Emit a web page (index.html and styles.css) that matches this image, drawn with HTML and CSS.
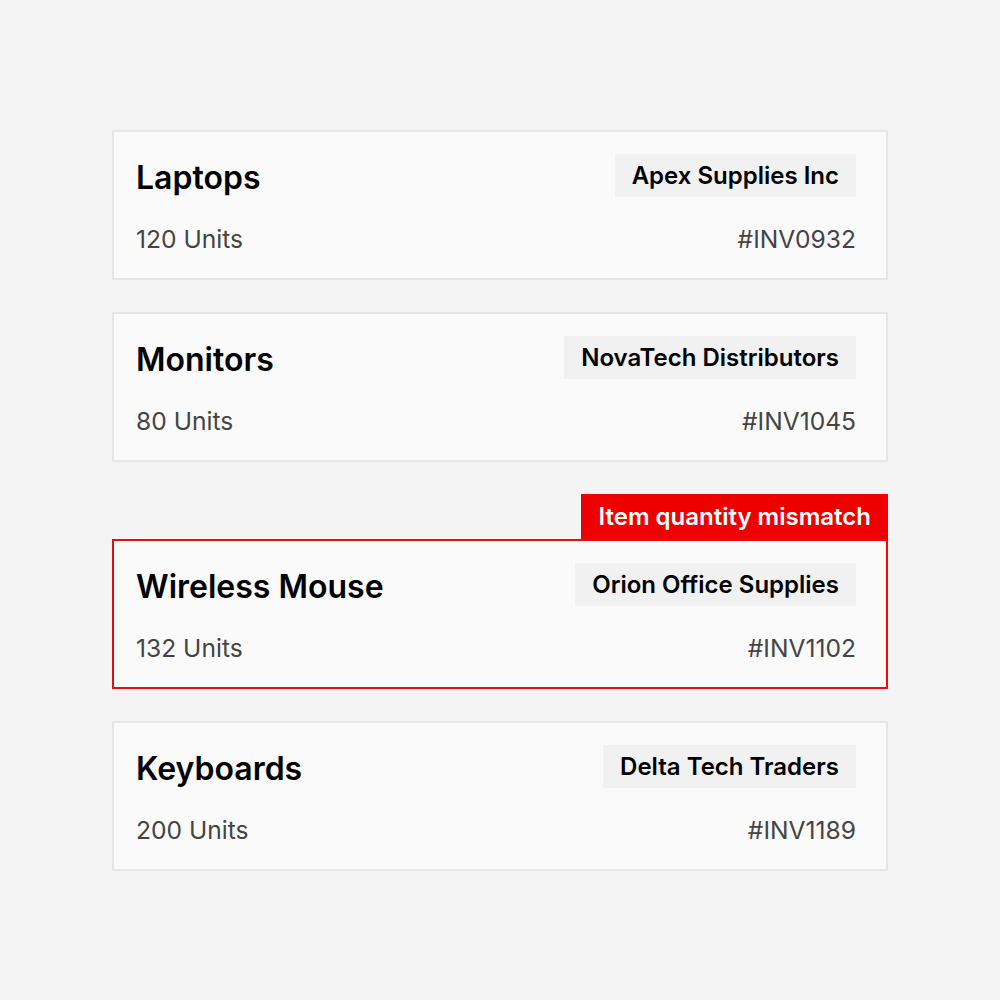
FILE: index.html
```html
<!DOCTYPE html>
<html lang="en">
<head>
  <meta charset="UTF-8">
  <title>Inventory Items</title>
  <link rel="stylesheet" href="styles.css">
</head>
<body>
  <div class="list">
    <div class="item">
      <div class="item-card">
        <div class="item-top">
          <h2 class="item-name">Laptops</h2>
          <span class="supplier">Apex Supplies Inc</span>
        </div>
        <div class="item-bottom">
          <span class="units">120 Units</span>
          <span class="invoice">#INV0932</span>
        </div>
      </div>
    </div>

    <div class="item">
      <div class="item-card">
        <div class="item-top">
          <h2 class="item-name">Monitors</h2>
          <span class="supplier">NovaTech Distributors</span>
        </div>
        <div class="item-bottom">
          <span class="units">80 Units</span>
          <span class="invoice">#INV1045</span>
        </div>
      </div>
    </div>

    <div class="item flagged">
      <div class="flag">Item quantity mismatch</div>
      <div class="item-card">
        <div class="item-top">
          <h2 class="item-name">Wireless Mouse</h2>
          <span class="supplier">Orion Office Supplies</span>
        </div>
        <div class="item-bottom">
          <span class="units">132 Units</span>
          <span class="invoice">#INV1102</span>
        </div>
      </div>
    </div>

    <div class="item">
      <div class="item-card">
        <div class="item-top">
          <h2 class="item-name">Keyboards</h2>
          <span class="supplier">Delta Tech Traders</span>
        </div>
        <div class="item-bottom">
          <span class="units">200 Units</span>
          <span class="invoice">#INV1189</span>
        </div>
      </div>
    </div>
  </div>
</body>
</html>
```

FILE: styles.css
```css
body {
  margin: 0;
  background: #f4f4f4;
  font-family: Inter, 'Noto Sans', sans-serif;
  color: #000;
}
.list {
  width: 776px;
  margin: 130px auto 0;
  display: flex;
  flex-direction: column;
  gap: 32px;
}
.item {
  display: flex;
  flex-direction: column;
}
.item-card {
  background: #fafafa;
  border: 2px solid #e6e6e6;
  padding: 22px 30px 24px 22px;
}
.item-top {
  display: flex;
  justify-content: space-between;
  align-items: center;
  height: 43px;
}
.item-name {
  margin: 0;
  padding-top: 3px;
  font-size: 32px;
  font-weight: 600;
}
.supplier {
  background: #f1f1f1;
  padding: 0 17px;
  line-height: 43px;
  font-size: 24px;
  font-weight: 600;
}
.item-bottom {
  display: flex;
  justify-content: space-between;
  align-items: center;
  margin-top: 27px;
  line-height: 30px;
  font-size: 24.6px;
  color: #444;
}
.flag {
  align-self: flex-end;
  background: #ee0000;
  color: #fff;
  font-size: 24px;
  font-weight: 600;
  line-height: 45px;
  padding: 0 17px;
}
.flagged .item-card {
  border-color: #e01010;
}
```
